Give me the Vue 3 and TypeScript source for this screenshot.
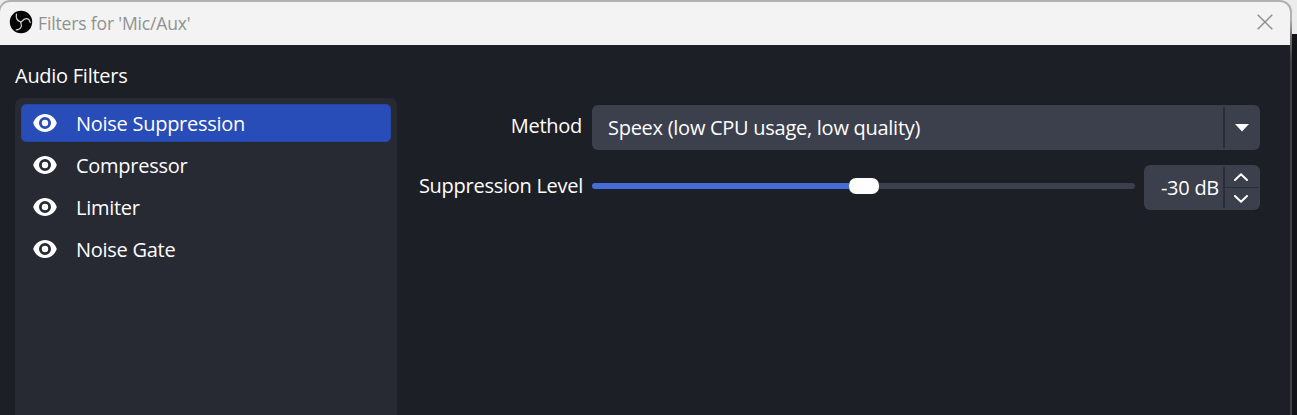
<script setup lang="ts">
import { ref } from 'vue'

interface Filter {
  name: string
}

const filters: Filter[] = [
  { name: 'Noise Suppression' },
  { name: 'Compressor' },
  { name: 'Limiter' },
  { name: 'Noise Gate' },
]
const selected = ref(0)
const level = ref(-30)
</script>

<template>
  <div class="desktop">
    <div class="window">
      <header class="titlebar">
        <svg class="logo" viewBox="0 0 24 24">
          <circle cx="12" cy="12" r="11.2" fill="#050505" />
          <g fill="none" stroke="#d2d2d2" stroke-width="1.2" stroke-linecap="round">
            <path d="M7.4 4C6.8 7.8 8 10.8 11.8 12" />
            <path d="M11.8 12C13.6 11.4 14.2 9.2 16.4 8.8C18.8 8.4 20.6 10 21.2 12.6" />
            <path d="M11.8 12C11.6 13.6 13 14.8 12.2 16.8C11.4 18.8 9.6 19.8 7.2 19.8" />
          </g>
        </svg>
        <span class="title">Filters for 'Mic/Aux'</span>
        <svg class="close" viewBox="0 0 16 16">
          <path d="M.7.7l14.6 14.6M15.3.7L.7 15.3" fill="none" stroke="#8b8b8b" stroke-width="1.4" />
        </svg>
      </header>
      <main class="content">
        <section class="sidebar">
          <h1 class="heading"><span>Audio Filters</span></h1>
          <ul class="list">
            <li
              v-for="(filter, i) in filters"
              :key="filter.name"
              class="item"
              :class="{ active: i === selected }"
              @click="selected = i"
            >
              <svg class="eye" viewBox="0 0 24 18">
                <path
                  fill="#fefefe"
                  fill-rule="evenodd"
                  d="M12 0C6.5 0 2 3.7.2 9C2 14.3 6.5 18 12 18S22 14.3 23.8 9C22 3.7 17.5 0 12 0ZM12 3A6 6 0 1 1 12 15A6 6 0 0 1 12 3ZM12 5.8A3.2 3.2 0 1 0 12 12.2A3.2 3.2 0 0 0 12 5.8Z"
                />
              </svg>
              <span>{{ filter.name }}</span>
            </li>
          </ul>
        </section>
        <section class="form">
          <span class="label method">Method</span>
          <div class="combo">
            <span class="value">Speex (low CPU usage, low quality)</span>
            <div class="drop">
              <svg width="14" height="8" viewBox="0 0 14 8"><path d="M0 0H14L7 7.6Z" fill="#fefefe" /></svg>
            </div>
          </div>
          <span class="label suppression">Suppression Level</span>
          <div class="level">
            <div class="slider">
              <div class="filled"></div>
              <div class="handle"></div>
              <div class="rest"></div>
            </div>
            <div class="spin">
              <span class="number">{{ level }} dB</span>
              <div class="steps">
                <div class="step up" @click="level++">
                  <svg width="14" height="8" viewBox="0 0 14 8"><path d="M1 7L7 1.2L13 7" /></svg>
                </div>
                <div class="step down" @click="level--">
                  <svg width="14" height="8" viewBox="0 0 14 8"><path d="M1 1L7 6.8L13 1" /></svg>
                </div>
              </div>
            </div>
          </div>
        </section>
      </main>
    </div>
  </div>
</template>

<style>
body {
  margin: 0;
  overflow: hidden;
}
</style>

<style scoped>
* {
  box-sizing: border-box;
}
.desktop {
  width: 1297px;
  height: 415px;
  overflow: hidden;
  background: linear-gradient(#ececec 34px, #111318 34px);
  font-family: 'Open Sans', 'Noto Sans', sans-serif;
  font-size: 20px;
  letter-spacing: -0.27px;
  color: #fefefe;
}
.window {
  width: 1293px;
  height: 430px;
  margin-left: -1px;
  border-radius: 11px 12px 0 0;
  padding: 2px 2px 0 1px;
  background: linear-gradient(#b1b1b1 20px, #77787a 34px, #414244 60px);
}
.titlebar {
  height: 43px;
  display: flex;
  align-items: center;
  padding: 0 17px 0 9px;
  background: #f3f3f3;
  border-radius: 10px 10px 0 0;
}
.logo {
  width: 24px;
  height: 24px;
  margin-top: -3px;
}
.title {
  margin-left: 5px;
  font-size: 17.5px;
  letter-spacing: -0.15px;
  line-height: 24px;
  color: #919191;
  white-space: nowrap;
  margin-top: -1px;
}
.close {
  width: 16px;
  height: 16px;
  margin-left: auto;
  margin-top: -3px;
}
.content {
  height: 385px;
  display: flex;
  gap: 22px;
  padding-left: 15px;
  background: #1d1f26;
}
.sidebar {
  width: 382px;
  display: flex;
  flex-direction: column;
}
.heading {
  height: 53px;
  margin: 0;
  padding-top: 17px;
  font-size: 20px;
  line-height: 28px;
  font-weight: 400;
}
.list {
  flex: 1;
  margin: 0;
  padding: 6px 6.5px 0 6px;
  list-style: none;
  background: #272a33;
  border-radius: 7px 7px 0 0;
}
.item {
  height: 38px;
  margin-bottom: 4px;
  padding-left: 12px;
  display: flex;
  align-items: center;
  gap: 19px;
  border-radius: 5px;
  white-space: nowrap;
}
.item span {
  padding-top: 1px;
}
.active {
  background: #284cb8;
  border: 1px solid #2348a8;
  padding-left: 11px;
}
.eye {
  width: 24px;
  height: 18px;
}
.form {
  display: grid;
  grid-template-columns: 164px 667.5px;
  grid-template-rows: 45px 45px;
  column-gap: 9px;
  row-gap: 15px;
  padding-top: 60px;
  align-content: start;
}
.label {
  justify-self: end;
  white-space: nowrap;
  line-height: 42px;
}
.method {
  padding-right: 1px;
}
.combo,
.spin {
  display: flex;
  background: #3c404d;
  border-radius: 6px;
}
.value {
  flex: 1;
  padding-left: 16px;
  line-height: 45px;
  white-space: nowrap;
}
.drop {
  width: 36.5px;
  padding-right: 1px;
  margin: 2px 0;
  display: flex;
  align-items: center;
  justify-content: center;
  border-left: 2px solid #2a2d37;
}
.level {
  display: flex;
  gap: 9px;
}
.slider {
  flex: 1;
  display: flex;
  align-items: center;
  height: 42px;
}
.filled {
  width: 256.5px;
  height: 6px;
  background: #476bd7;
  border-radius: 3px 0 0 3px;
}
.handle {
  width: 30px;
  height: 16px;
  background: #fefefe;
  border-radius: 7px;
}
.rest {
  flex: 1;
  height: 6px;
  background: #3c404d;
  border-radius: 0 3px 3px 0;
}
.spin {
  width: 115.5px;
}
.number {
  flex: 1;
  padding-right: 4px;
  text-align: right;
  line-height: 45px;
}
.steps {
  width: 36.5px;
  margin: 2px 0;
  display: flex;
  flex-direction: column;
  border-left: 2px solid #2a2d37;
}
.step {
  flex: 1;
  display: flex;
  justify-content: center;
  margin-right: 2px;
}
.up {
  padding-top: 6px;
  border-bottom: 1px solid #2a2d37;
}
.down {
  padding-top: 7px;
}
.step svg {
  fill: none;
  stroke: #fefefe;
  stroke-width: 2;
  stroke-linecap: round;
  stroke-linejoin: round;
}
</style>
